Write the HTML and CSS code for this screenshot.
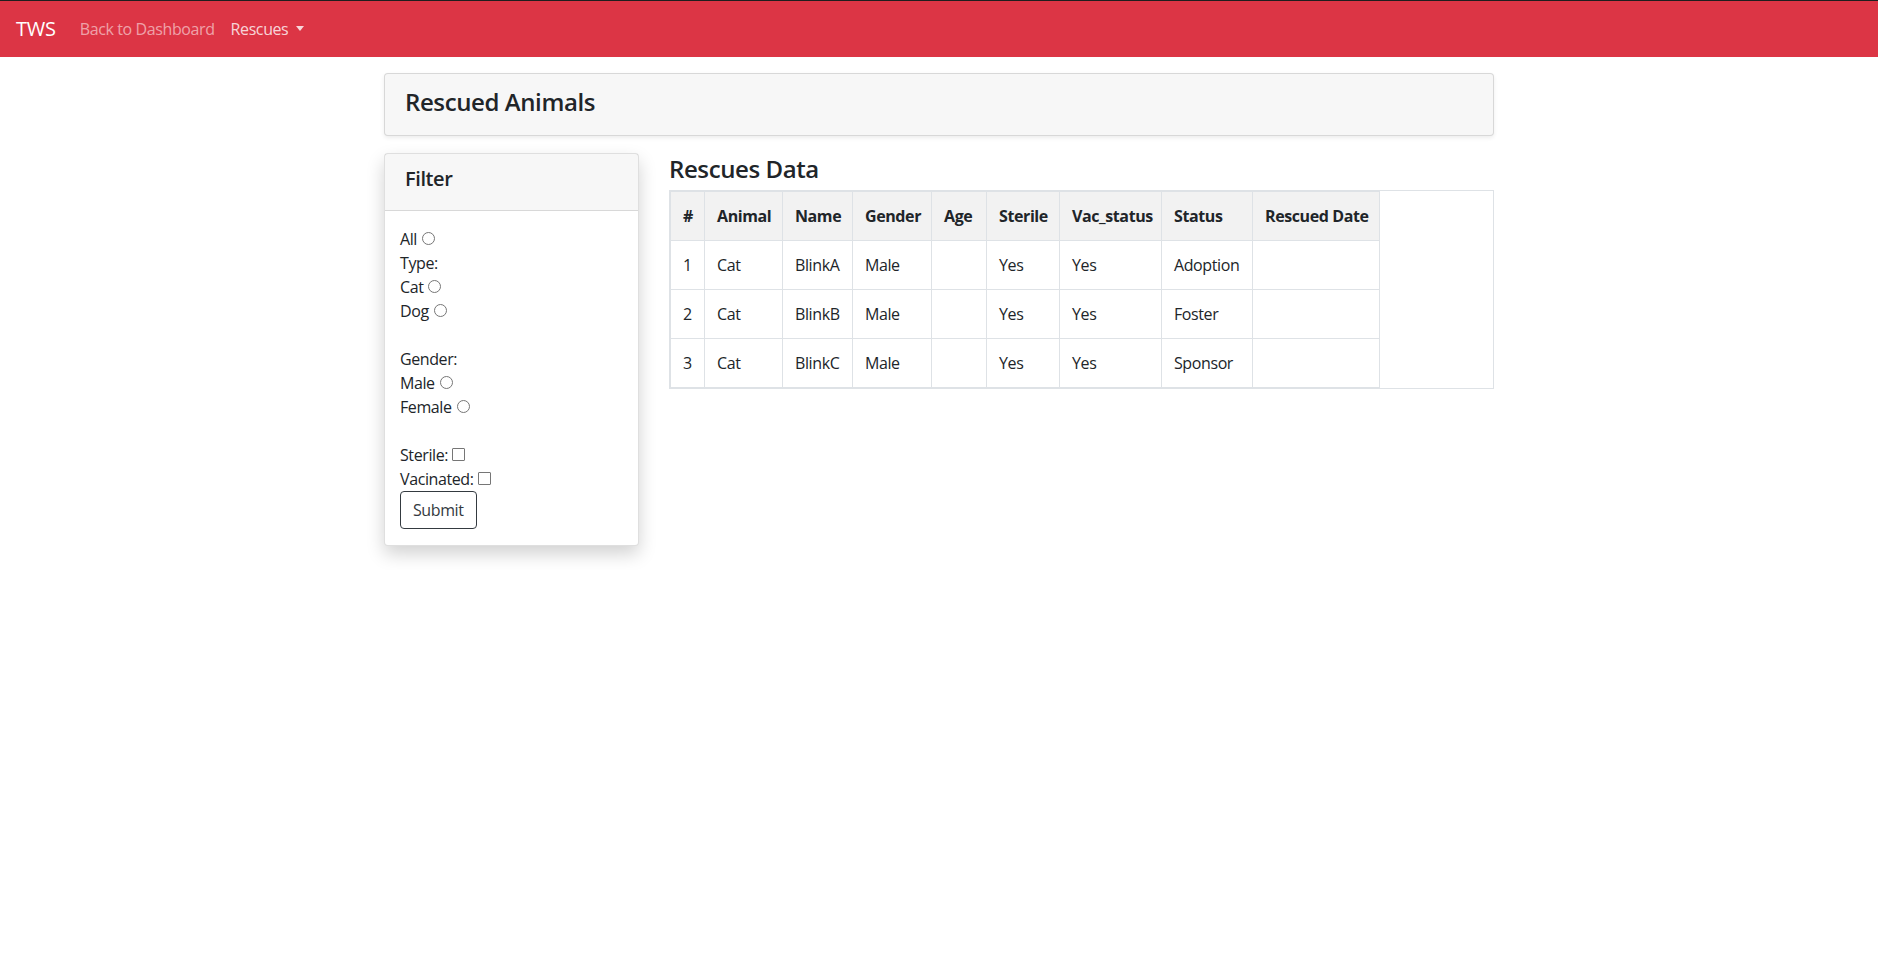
FILE: index.html
```html
<!DOCTYPE html>
<html lang="en">
<head>
<meta charset="utf-8">
<title>Rescued Animals</title>
<link rel="stylesheet" href="styles.css">
</head>
<body>
<nav class="navbar">
  <a class="brand" href="#">TWS</a>
  <ul class="nav">
    <li><a class="nav-link" href="#">Back to Dashboard</a></li>
    <li><a class="nav-link nav-link-bright" href="#">Rescues<span class="caret"></span></a></li>
  </ul>
</nav>
<main class="container">
  <div class="title-card">
    <h4 class="title">Rescued Animals</h4>
  </div>
  <div class="row">
    <aside class="col-side">
      <div class="filter-card">
        <div class="filter-header"><h5 class="filter-title">Filter</h5></div>
        <form class="filter-body">All<input class="radio" type="radio" name="type"><br>Type:<br>Cat<input class="radio" type="radio" name="type"><br>Dog<input class="radio" type="radio" name="type"><br><br>Gender:<br>Male<input class="radio" type="radio" name="gender"><br>Female<input class="radio" type="radio" name="gender"><br><br>Sterile:<input class="check" type="checkbox"><br>Vacinated:<input class="check" type="checkbox"><br><button type="button" class="btn">Submit</button></form>
      </div>
    </aside>
    <section class="col-main">
      <h4 class="section-title">Rescues Data</h4>
      <div class="table-wrap">
        <table class="data">
          <colgroup>
            <col class="w-num"><col class="w-animal"><col class="w-name"><col class="w-gender"><col class="w-age"><col class="w-sterile"><col class="w-vac"><col class="w-status"><col class="w-date">
          </colgroup>
          <thead>
            <tr><th>#</th><th>Animal</th><th>Name</th><th>Gender</th><th>Age</th><th>Sterile</th><th>Vac_status</th><th>Status</th><th class="center">Rescued Date</th></tr>
          </thead>
          <tbody>
            <tr><td>1</td><td>Cat</td><td>BlinkA</td><td>Male</td><td></td><td>Yes</td><td>Yes</td><td>Adoption</td><td></td></tr>
            <tr><td>2</td><td>Cat</td><td>BlinkB</td><td>Male</td><td></td><td>Yes</td><td>Yes</td><td>Foster</td><td></td></tr>
            <tr><td>3</td><td>Cat</td><td>BlinkC</td><td>Male</td><td></td><td>Yes</td><td>Yes</td><td>Sponsor</td><td></td></tr>
          </tbody>
        </table>
      </div>
    </section>
  </div>
</main>
</body>
</html>
```

FILE: styles.css
```css
* { box-sizing: border-box; }
html, body { margin: 0; padding: 0; }
body {
  font-family: "Open Sans", "Noto Sans", "Liberation Sans", sans-serif;
  font-size: 16px;
  line-height: 1.5;
  color: #212529;
  background: #fff;
  border-top: 1px solid #1e1e1e;
  letter-spacing: -0.025em;
}

.navbar {
  display: flex;
  align-items: center;
  height: 56px;
  padding: 8px 16px;
  background: #dc3545;
}
.brand {
  font-size: 20px;
  line-height: 30px;
  color: #fff;
  text-decoration: none;
  margin-right: 16px;
  letter-spacing: -0.01em;
}
.nav { display: flex; list-style: none; margin: 0; padding: 0; }
.nav-link {
  display: block;
  padding: 8px;
  color: rgba(255,255,255,.55);
  text-decoration: none;
}
.nav-link-bright { color: rgba(255,255,255,.8); }
.caret {
  display: inline-block;
  margin-left: 8px;
  vertical-align: 4px;
  border-top: 5px solid;
  border-left: 4px solid transparent;
  border-right: 4px solid transparent;
}

.container {
  width: 1140px;
  margin: 0 auto;
  padding: 16px 15px 0;
}
.title-card {
  background: #f7f7f7;
  border: 1px solid rgba(0,0,0,.125);
  border-radius: 4px;
  box-shadow: 0 2px 4px rgba(0,0,0,.075);
  padding: 14px 20px 18px;
  margin-bottom: 17px;
}
h4, h5 { margin: 0; font-weight: 600; line-height: 1.2; }
.title { font-size: 24px; }

.row { display: flex; gap: 30px; align-items: flex-start; }
.col-side { width: 255px; flex: none; padding-bottom: 24px; }
.col-main { flex: 1; min-width: 0; }

.filter-card {
  background: #fff;
  border: 1px solid rgba(0,0,0,.125);
  border-radius: 4px;
  box-shadow: 0 8px 18px rgba(0,0,0,.18);
}
.filter-header {
  background: rgba(0,0,0,.03);
  border-bottom: 1px solid rgba(0,0,0,.125);
  padding: 13px 20px 11px;
}
.filter-title { font-size: 20px; margin-bottom: 8px; }
.filter-body { padding: 16px 15px; }
.radio, .check {
  -webkit-appearance: none;
  appearance: none;
  display: inline-block;
  width: 13px;
  height: 13px;
  border: 1px solid #767676;
  background: #fff;
  vertical-align: 0;
}
.radio { border-radius: 50%; margin: 3px 3px 0 5px; }
.check { border-radius: 1px; margin: 3px 3px 0 4px; }
.btn {
  font: inherit;
  letter-spacing: inherit;
  color: #343a40;
  background: transparent;
  border: 1px solid #343a40;
  border-radius: 4px;
  padding: 6px 12px;
  line-height: 24px;
  cursor: pointer;
}

.section-title { font-size: 24px; padding-top: 2px; margin-bottom: 6px; }
.table-wrap { border: 1px solid #dee2e6; }
.data {
  border-collapse: separate;
  border-spacing: 0;
  table-layout: fixed;
  width: 710px;
  border-left: 1px solid #dee2e6;
  border-top: 1px solid #dee2e6;
}
.data th, .data td {
  box-sizing: border-box;
  padding: 12px;
  border-right: 1px solid #dee2e6;
  border-bottom: 1px solid #dee2e6;
  text-align: left;
  vertical-align: top;
  white-space: nowrap;
  height: 49px;
}
.data thead th { background: #f2f2f2; font-weight: 700; vertical-align: bottom; }
.data .center { text-align: center; }
.w-num { width: 34px; }
.w-animal { width: 78px; }
.w-name { width: 70px; }
.w-gender { width: 79px; }
.w-age { width: 55px; }
.w-sterile { width: 73px; }
.w-vac { width: 102px; }
.w-status { width: 91px; }
.w-date { width: 127px; }
```
